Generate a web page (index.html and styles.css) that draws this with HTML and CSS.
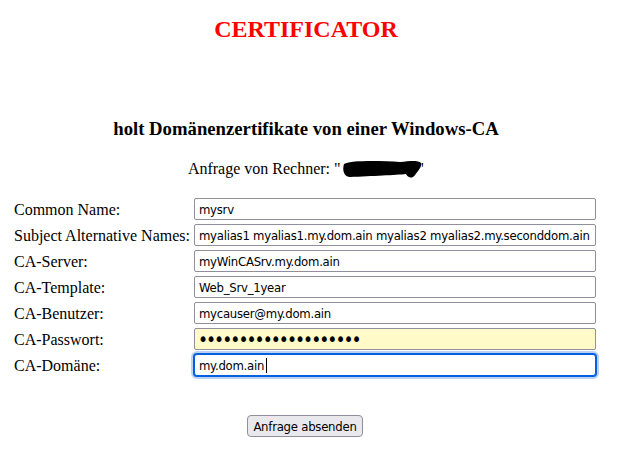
FILE: index.html
```html
<!DOCTYPE html>
<html lang="de">
<head>
<meta charset="utf-8">
<title>CERTIFICATOR</title>
<link rel="stylesheet" href="styles.css">
</head>
<body>
<div class="page">
  <h2 class="title">CERTIFICATOR</h2>
  <h3 class="subtitle">holt Domänenzertifikate von einer Windows-CA</h3>
  <p class="host">Anfrage von Rechner: "<svg class="blob" width="80" height="20" viewBox="0 0 80 20"><path d="M2,6 C10,2 40,3 58,4 C68,3 76,2 79,5 C80,9 76,13 73,17 C70,21 66,20 64,16 C54,17 30,18 8,19 C2,19 0,12 2,6 Z" fill="#000"/></svg>"</p>
  <form class="form">
    <label class="lbl" for="cn">Common Name:</label>
    <input class="field" id="cn" type="text" value="mysrv">
    <label class="lbl" for="san">Subject Alternative Names:</label>
    <input class="field" id="san" type="text" value="myalias1 myalias1.my.dom.ain myalias2 myalias2.my.seconddom.ain">
    <label class="lbl" for="srv">CA-Server:</label>
    <input class="field" id="srv" type="text" value="myWinCASrv.my.dom.ain">
    <label class="lbl" for="tpl">CA-Template:</label>
    <input class="field" id="tpl" type="text" value="Web_Srv_1year">
    <label class="lbl" for="usr">CA-Benutzer:</label>
    <input class="field" id="usr" type="text" value="mycauser@my.dom.ain">
    <label class="lbl" for="pw">CA-Passwort:</label>
    <input class="field autofill" id="pw" type="password" value="xxxxxxxxxxxxxxxxxxxx">
    <label class="lbl" for="dom">CA-Domäne:</label>
    <span class="fieldwrap">
      <input class="field focused" id="dom" type="text" value="my.dom.ain">
      <span class="caret"></span>
    </span>
    <div class="actions">
      <button class="btn" type="button">Anfrage absenden</button>
    </div>
  </form>
</div>
</body>
</html>
```

FILE: styles.css
```css
html, body {
  margin: 0;
  padding: 0;
  background: #fff;
}

body {
  font-family: "Liberation Serif", "Times New Roman", serif;
  font-size: 16px;
  color: #000;
}

.page {
  width: 584px;
  margin-left: 14px;
}

.title {
  margin: 15px 0 0;
  font-size: 24px;
  line-height: 28px;
  font-weight: bold;
  color: #ff0000;
  text-align: center;
}

.subtitle {
  margin: 75px 0 0;
  font-size: 18.72px;
  line-height: 22px;
  font-weight: bold;
  text-align: center;
}

.host {
  margin: 18px 0 0;
  line-height: 19px;
  text-align: center;
}

.blob {
  vertical-align: -4px;
  margin-left: 1px;
  margin-right: -4px;
}

.form {
  margin-top: 20px;
  display: grid;
  grid-template-columns: max-content 402px;
  column-gap: 4px;
  row-gap: 4px;
  align-items: end;
}

.lbl {
  line-height: 19px;
  white-space: nowrap;
  position: relative;
  top: -1px;
}

.field {
  display: block;
  box-sizing: border-box;
  width: 402px;
  height: 22px;
  margin: 0;
  padding: 0 4px;
  border: 1px solid #8f8f9d;
  border-radius: 2px;
  background: #fff;
  color: #000;
  font-family: "DejaVu Sans Condensed", "DejaVu Sans", sans-serif;
  font-stretch: condensed;
  font-size: 13px;
  letter-spacing: -0.25px;
  outline: none;
}

.autofill {
  background: #fffac8;
  font-size: 19px;
  letter-spacing: -2px;
  padding-left: 3px;
}

.fieldwrap {
  position: relative;
  display: block;
}

.focused {
  border-color: #0060df;
  box-shadow: 0 0 0 1px #0060df, 0 0 0 3px #bcd2f4;
  border-radius: 3px;
}

.caret {
  position: absolute;
  left: 72px;
  top: 4px;
  width: 1px;
  height: 15px;
  background: #000;
}

.actions {
  grid-column: 1 / span 2;
  display: flex;
  justify-content: center;
  margin-top: 35px;
}

.btn {
  box-sizing: border-box;
  width: 116px;
  height: 22px;
  padding: 0 4px;
  border: 1px solid #8f8f9d;
  border-radius: 4px;
  background: #e9e9ed;
  color: #000;
  font-family: "DejaVu Sans Condensed", "DejaVu Sans", sans-serif;
  font-stretch: condensed;
  font-size: 13px;
  letter-spacing: -0.25px;
}
```
